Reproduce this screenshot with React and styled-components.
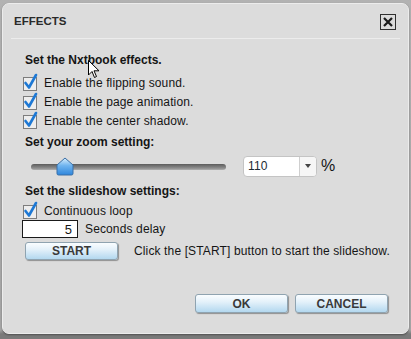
import React from 'react'
import styled, { createGlobalStyle } from 'styled-components'

const Global = createGlobalStyle`
    html, body {
        margin: 0;
        padding: 0;
        background: #8a8a8a;
    }
    * {
        box-sizing: border-box;
    }
`

const Page = styled.div`
    position: relative;
    width: 411px;
    height: 339px;
    padding: 3px 2px 5px 2px;
    background: linear-gradient(#b2b2b2 0, #a6a6a6 330px, #7a7a7a 334px);
    font-family: "Liberation Sans", Arial, sans-serif;
    font-size: 12px;
    letter-spacing: 0.13px;
    color: #151515;
`

const Dialog = styled.div`
    width: 407px;
    height: 331px;
    display: flex;
    flex-direction: column;
    background: #dcdcdc;
    border: 1px solid #ececec;
    border-radius: 7px;
    box-shadow: 0 1px 2px rgba(0, 0, 0, 0.35);
`

const TitleBar = styled.div`
    height: 34px;
    display: flex;
    align-items: center;
    justify-content: space-between;
    padding: 0 12px 0 11px;
`

const Title = styled.div`
    font-weight: bold;
    font-size: 11.5px;
    letter-spacing: 0;
    color: #2a2a2a;
`

const CloseButton = styled.div`
    width: 16px;
    height: 16px;
    margin-top: 1px;
    border: 1px solid #303030;
    display: flex;
    align-items: center;
    justify-content: center;
`

const Divider = styled.div`
    height: 1px;
    margin: 0 8px;
    background: #ececec;
`

const Body = styled.div`
    display: flex;
    flex-direction: column;
    padding: 0 0 0 22px;
`

const Heading = styled.div`
    height: 18px;
    margin-top: ${p => p.$top || 0}px;
    display: flex;
    align-items: center;
    font-weight: bold;
    letter-spacing: 0;
`

const Row = styled.div`
    height: ${p => p.$h || 19}px;
    margin-top: ${p => p.$top || 0}px;
    display: flex;
    align-items: center;
    gap: ${p => p.$gap || 0}px;
`

const CheckLabel = styled.label`
    display: flex;
    align-items: center;
    gap: 6px;
    margin-left: -2px;
`

const SliderBox = styled.div`
    position: relative;
    width: 195px;
    height: 24px;
    margin-left: 6px;
    display: flex;
    align-items: center;
    padding-top: 2px;
`

const Track = styled.div`
    width: 100%;
    height: 6px;
    border-radius: 3px;
    background: linear-gradient(#5c5c5c, #8e8e8e 70%, #b0b0b0);
`

const Thumb = styled.svg`
    position: absolute;
    left: 25px;
    top: 3px;
`

const Select = styled.div`
    width: 74px;
    height: 21px;
    margin-left: 17px;
    display: flex;
    background: #fff;
    border: 1px solid #c4c4c4;
    border-radius: 4px;
    overflow: hidden;
`

const SelectValue = styled.div`
    flex: 1;
    display: flex;
    align-items: center;
    padding-left: 4px;
    color: #1a2a33;
`

const SelectArrow = styled.div`
    width: 17px;
    display: flex;
    align-items: center;
    justify-content: center;
    border-left: 1px solid #cfcfcf;
    background: #f6f6f6;
`

const Percent = styled.span`
    margin-left: 4px;
    font-size: 16px;
`

const NumberBox = styled.div`
    width: 56px;
    height: 18px;
    margin-left: -3px;
    background: #fff;
    border: 1px solid #1a1a1a;
    display: flex;
    align-items: center;
    justify-content: flex-end;
    padding-right: 5px;
    font-size: 13px;
`

const Button = styled.button`
    width: 93px;
    height: ${p => p.$h || 18}px;
    padding: 0;
    border: 1px solid #8fa3b0;
    border-radius: 3px;
    background: linear-gradient(#fafdff 0%, #e4f1fa 40%, #b3d8ef 100%);
    box-shadow: 1px 1px 1px rgba(0, 0, 0, 0.35);
    font-family: "Liberation Sans", Arial, sans-serif;
    font-weight: bold;
    font-size: 12px;
    color: #3a3a3a;
`

const Footer = styled.div`
    margin-top: auto;
    display: flex;
    justify-content: flex-end;
    gap: 7px;
    padding: 0 20px 20px 0;
`

const Cursor = styled.svg`
    position: absolute;
    left: 88px;
    top: 60px;
`

const Check = () => (
    <svg width="15" height="17" viewBox="0 0 15 17" style={{ overflow: 'visible' }}>
        <rect x="0.5" y="3.5" width="13" height="13" fill="#eeeeee" stroke="#7d7d7d" />
        <path d="M2.5 9 L6 13.5 L13 1" fill="none" stroke="#1d78d4" strokeWidth="2.6" strokeLinecap="round" strokeLinejoin="round" />
    </svg>
)

const CheckItem = ({ children }) => (
    <Row>
        <CheckLabel>
            <Check />
            {children}
        </CheckLabel>
    </Row>
)

export default function App() {
    return (
        <Page>
            <Global />
            <Dialog>
                <TitleBar>
                    <Title>EFFECTS</Title>
                    <CloseButton>
                        <svg width="10" height="10" viewBox="0 0 10 10">
                            <path d="M1 1 L9 9 M9 1 L1 9" stroke="#1a1a1a" strokeWidth="2.2" />
                        </svg>
                    </CloseButton>
                </TitleBar>
                <Divider />
                <Body>
                    <Heading $top={12}>Set the Nxtbook effects.</Heading>
                    <Row $h={4} />
                    <CheckItem>Enable the flipping sound.</CheckItem>
                    <CheckItem>Enable the page animation.</CheckItem>
                    <CheckItem>Enable the center shadow.</CheckItem>
                    <Heading $top={3}>Set your zoom setting:</Heading>
                    <Row $h={24} $top={3}>
                        <SliderBox>
                            <Track />
                            <Thumb width="18" height="19" viewBox="0 0 18 19">
                                <defs>
                                    <linearGradient id="thumb" x1="0" y1="0" x2="0" y2="1">
                                        <stop offset="0" stopColor="#d8eefc" />
                                        <stop offset="0.45" stopColor="#6fb4ef" />
                                        <stop offset="1" stopColor="#2f86dc" />
                                    </linearGradient>
                                </defs>
                                <path d="M1 8 L9 1 L17 8 L17 16.5 Q17 18 15.5 18 L2.5 18 Q1 18 1 16.5 Z" fill="url(#thumb)" stroke="#3a6fa6" strokeWidth="1" />
                            </Thumb>
                        </SliderBox>
                        <Select>
                            <SelectValue>110</SelectValue>
                            <SelectArrow>
                                <svg width="6" height="4" viewBox="0 0 6 4">
                                    <path d="M0 0 L6 0 L3 4 Z" fill="#444" />
                                </svg>
                            </SelectArrow>
                        </Select>
                        <Percent>%</Percent>
                    </Row>
                    <Heading $top={4}>Set the slideshow settings:</Heading>
                    <Row $h={1} />
                    <CheckItem>Continuous loop</CheckItem>
                    <Row $h={18} $gap={7}>
                        <NumberBox>5</NumberBox>
                        <span>Seconds delay</span>
                    </Row>
                    <Row $h={18} $top={4} $gap={16}>
                        <Button>START</Button>
                        <span>Click the [START] button to start the slideshow.</span>
                    </Row>
                </Body>
                <Footer>
                    <Button $h={19}>OK</Button>
                    <Button $h={19}>CANCEL</Button>
                </Footer>
            </Dialog>
            <Cursor width="12" height="19" viewBox="0 0 12 19">
                <path d="M0.5 0.5 L0.5 15 L4 11.5 L6.5 17.5 L8.5 16.5 L6 10.8 L11 10.8 Z" fill="#fff" stroke="#000" strokeWidth="1" strokeLinejoin="round" />
            </Cursor>
        </Page>
    )
}
